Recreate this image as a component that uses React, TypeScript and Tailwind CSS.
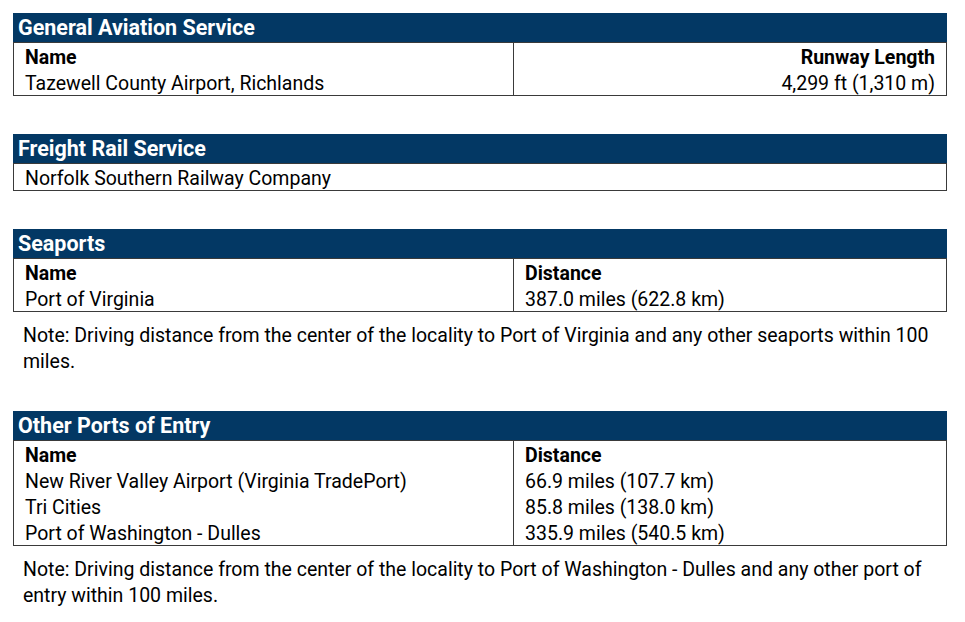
type Row = { name: string; value?: string };

type Section = {
  title: string;
  valueLabel?: string;
  alignRight?: boolean;
  rows: Row[];
  note?: string;
};

const SECTIONS: Section[] = [
  {
    title: "General Aviation Service",
    valueLabel: "Runway Length",
    alignRight: true,
    rows: [{ name: "Tazewell County Airport, Richlands", value: "4,299 ft (1,310 m)" }],
  },
  {
    title: "Freight Rail Service",
    rows: [{ name: "Norfolk Southern Railway Company" }],
  },
  {
    title: "Seaports",
    valueLabel: "Distance",
    rows: [{ name: "Port of Virginia", value: "387.0 miles (622.8 km)" }],
    note: "Note: Driving distance from the center of the locality to Port of Virginia and any other seaports within 100 miles.",
  },
  {
    title: "Other Ports of Entry",
    valueLabel: "Distance",
    rows: [
      { name: "New River Valley Airport (Virginia TradePort)", value: "66.9 miles (107.7 km)" },
      { name: "Tri Cities", value: "85.8 miles (138.0 km)" },
      { name: "Port of Washington - Dulles", value: "335.9 miles (540.5 km)" },
    ],
    note: "Note: Driving distance from the center of the locality to Port of Washington - Dulles and any other port of entry within 100 miles.",
  },
];

// cells are bottom-heavy like a spreadsheet export
const cell = "h-[26px] pt-[2px] leading-[26px]";

function InfoTable({ title, valueLabel, alignRight, rows, note }: Section) {
  const twoCol = valueLabel !== undefined;
  const valueCell = `${cell} border-l border-[#3a3a3a] ${alignRight ? "text-right pr-[11px]" : "pl-[11px]"}`;
  return (
    <section className={note ? "mb-[36px]" : "mb-[38px]"}>
      <div className="bg-[#033864] h-[29px] pl-[5px] pt-[1px] flex items-center text-white text-[21.5px] font-bold leading-none">
        {title}
      </div>
      <div className="border border-[#3a3a3a] text-black text-[19.5px]">
        {twoCol ? (
          <div className="grid grid-cols-[499px_1fr]">
            <div className={`${cell} pl-[11px] font-bold`}>Name</div>
            <div className={`${valueCell} font-bold`}>{valueLabel}</div>
            {rows.flatMap((r) => [
              <div key={r.name} className={`${cell} pl-[11px]`}>
                {r.name}
              </div>,
              <div key={r.name + "-v"} className={valueCell}>
                {r.value}
              </div>,
            ])}
          </div>
        ) : (
          rows.map((r) => (
            <div key={r.name} className={`${cell} pl-[11px]`}>
              {r.name}
            </div>
          ))
        )}
      </div>
      {note && (
        <p className="mt-[11px] pl-[10px] pr-[14px] text-[19.5px] leading-[26px] text-black">{note}</p>
      )}
    </section>
  );
}

export default function App() {
  return (
    <main
      className="bg-white min-h-screen w-[965px] pt-[13px] pl-[13px] pr-[18px]"
      style={{ fontFamily: "Roboto, 'Liberation Sans', sans-serif" }}
    >
      {SECTIONS.map((s) => (
        <InfoTable key={s.title} {...s} />
      ))}
    </main>
  );
}
